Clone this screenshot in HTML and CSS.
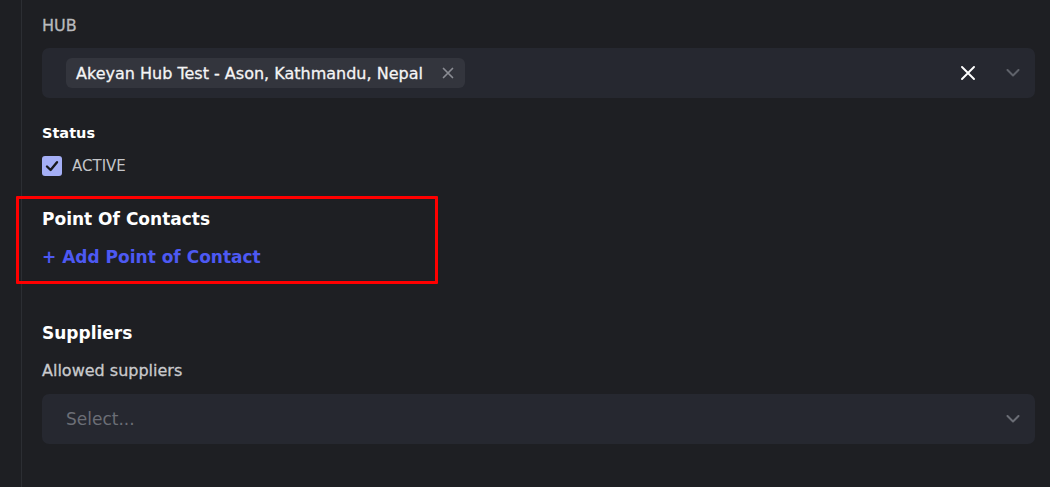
FILE: index.html
```html
<!DOCTYPE html>
<html lang="en">
<head>
<meta charset="utf-8">
<title>Hub form</title>
<link rel="stylesheet" href="styles.css">
</head>
<body>
<div class="page">
  <div class="field-label">HUB</div>
  <div class="select select-hub">
    <div class="select-values">
      <span class="chip">
        <span class="chip-text">Akeyan Hub Test - Ason, Kathmandu, Nepal</span>
        <svg class="chip-x" viewBox="0 0 12 12" width="12" height="12"><path d="M1.5 1.5 L10.5 10.5 M10.5 1.5 L1.5 10.5" stroke="#8a8c93" stroke-width="1.7" fill="none" stroke-linecap="round"/></svg>
      </span>
    </div>
    <svg class="clear-x" viewBox="0 0 14 14" width="14" height="14"><path d="M1 1 L13 13 M13 1 L1 13" stroke="#ffffff" stroke-width="1.9" fill="none" stroke-linecap="round"/></svg>
    <svg class="chevron" viewBox="0 0 14 8" width="14" height="8"><path d="M1.5 1 L7 6.5 L12.5 1" stroke="#5f626a" stroke-width="2" fill="none" stroke-linecap="round" stroke-linejoin="round"/></svg>
  </div>

  <div class="status-label">Status</div>
  <label class="check-row">
    <span class="checkbox"><svg viewBox="0 0 20 20" width="20" height="20"><path d="M5 10.5 L8.6 14 L15 6.2" stroke="#18191d" stroke-width="2.4" fill="none" stroke-linecap="round" stroke-linejoin="round"/></svg></span>
    <span class="check-text">ACTIVE</span>
  </label>

  <section class="poc">
    <div class="highlight"></div>
    <h2 class="section-title">Point Of Contacts</h2>
    <a class="add-link" href="#">+ Add Point of Contact</a>
  </section>

  <h2 class="section-title suppliers-title">Suppliers</h2>
  <div class="sub-label">Allowed suppliers</div>
  <div class="select select-suppliers">
    <div class="select-values"><span class="placeholder">Select...</span></div>
    <svg class="chevron" viewBox="0 0 14 8" width="14" height="8"><path d="M1.5 1 L7 6.5 L12.5 1" stroke="#6a6d75" stroke-width="2" fill="none" stroke-linecap="round" stroke-linejoin="round"/></svg>
  </div>
</div>
</body>
</html>
```
FILE: styles.css
```css
html, body {
  margin: 0;
  padding: 0;
  background: #1e1f23;
}
body {
  font-family: "DejaVu Sans", "Liberation Sans", sans-serif;
  color: #f2f2f2;
}
.page {
  margin-left: 21px;
  border-left: 1px solid #2c2e33;
  padding: 16px 15px 0 20px;
  min-height: 471px;
  display: flex;
  flex-direction: column;
}
.medium {
  -webkit-text-stroke: 0.3px currentColor;
}
.field-label {
  font-size: 16px;
  line-height: 20px;
  color: #b9babd;
  -webkit-text-stroke: 0.3px currentColor;
}
.select {
  margin-top: 12px;
  height: 50px;
  box-sizing: border-box;
  background: #262830;
  border-radius: 7px;
  display: flex;
  align-items: center;
  padding: 0 15px 0 24px;
}
.select-values {
  flex: 1;
  display: flex;
  align-items: center;
}
.chip {
  display: inline-flex;
  align-items: center;
  height: 30px;
  background: #33353d;
  border-radius: 6px;
  padding: 0 11px 0 10px;
  gap: 19px;
}
.chip-text {
  font-size: 16px;
  color: #f4f4f5;
  white-space: nowrap;
  -webkit-text-stroke: 0.3px currentColor;
}
.chip-x, .clear-x, .chevron {
  display: block;
  flex: none;
}
.clear-x {
  margin-right: 31px;
}
.status-label {
  margin-top: 25px;
  font-size: 14.5px;
  font-weight: 700;
  line-height: 20px;
  color: #ffffff;
}
.check-row {
  margin-top: 13px;
  display: flex;
  align-items: center;
  height: 20px;
  gap: 10px;
}
.checkbox {
  width: 20px;
  height: 20px;
  border-radius: 3px;
  background: #a5aff6;
  display: block;
}
.checkbox svg { display: block; }
.check-text {
  font-size: 15px;
  color: #c4c5c9;
  line-height: 20px;
}
.poc {
  position: relative;
  margin-top: 31px;
}
.highlight {
  position: absolute;
  left: -26px;
  top: -11px;
  width: 422px;
  height: 88px;
  box-sizing: border-box;
  border: 3px solid #ff0000;
  border-radius: 1px;
  pointer-events: none;
}
.section-title {
  margin: 0;
  font-size: 17px;
  font-weight: 700;
  line-height: 24px;
  color: #ffffff;
}
.add-link {
  display: block;
  margin-top: 14px;
  font-size: 17px;
  font-weight: 700;
  line-height: 24px;
  color: #4d59f3;
  text-decoration: none;
}
.suppliers-title {
  margin-top: 52px;
}
.sub-label {
  margin-top: 16px;
  font-size: 16px;
  line-height: 20px;
  color: #c9cacd;
  -webkit-text-stroke: 0.3px currentColor;
}
.select-suppliers {
  margin-top: 13px;
}
.placeholder {
  font-size: 17px;
  color: #6b6e76;
}
```
